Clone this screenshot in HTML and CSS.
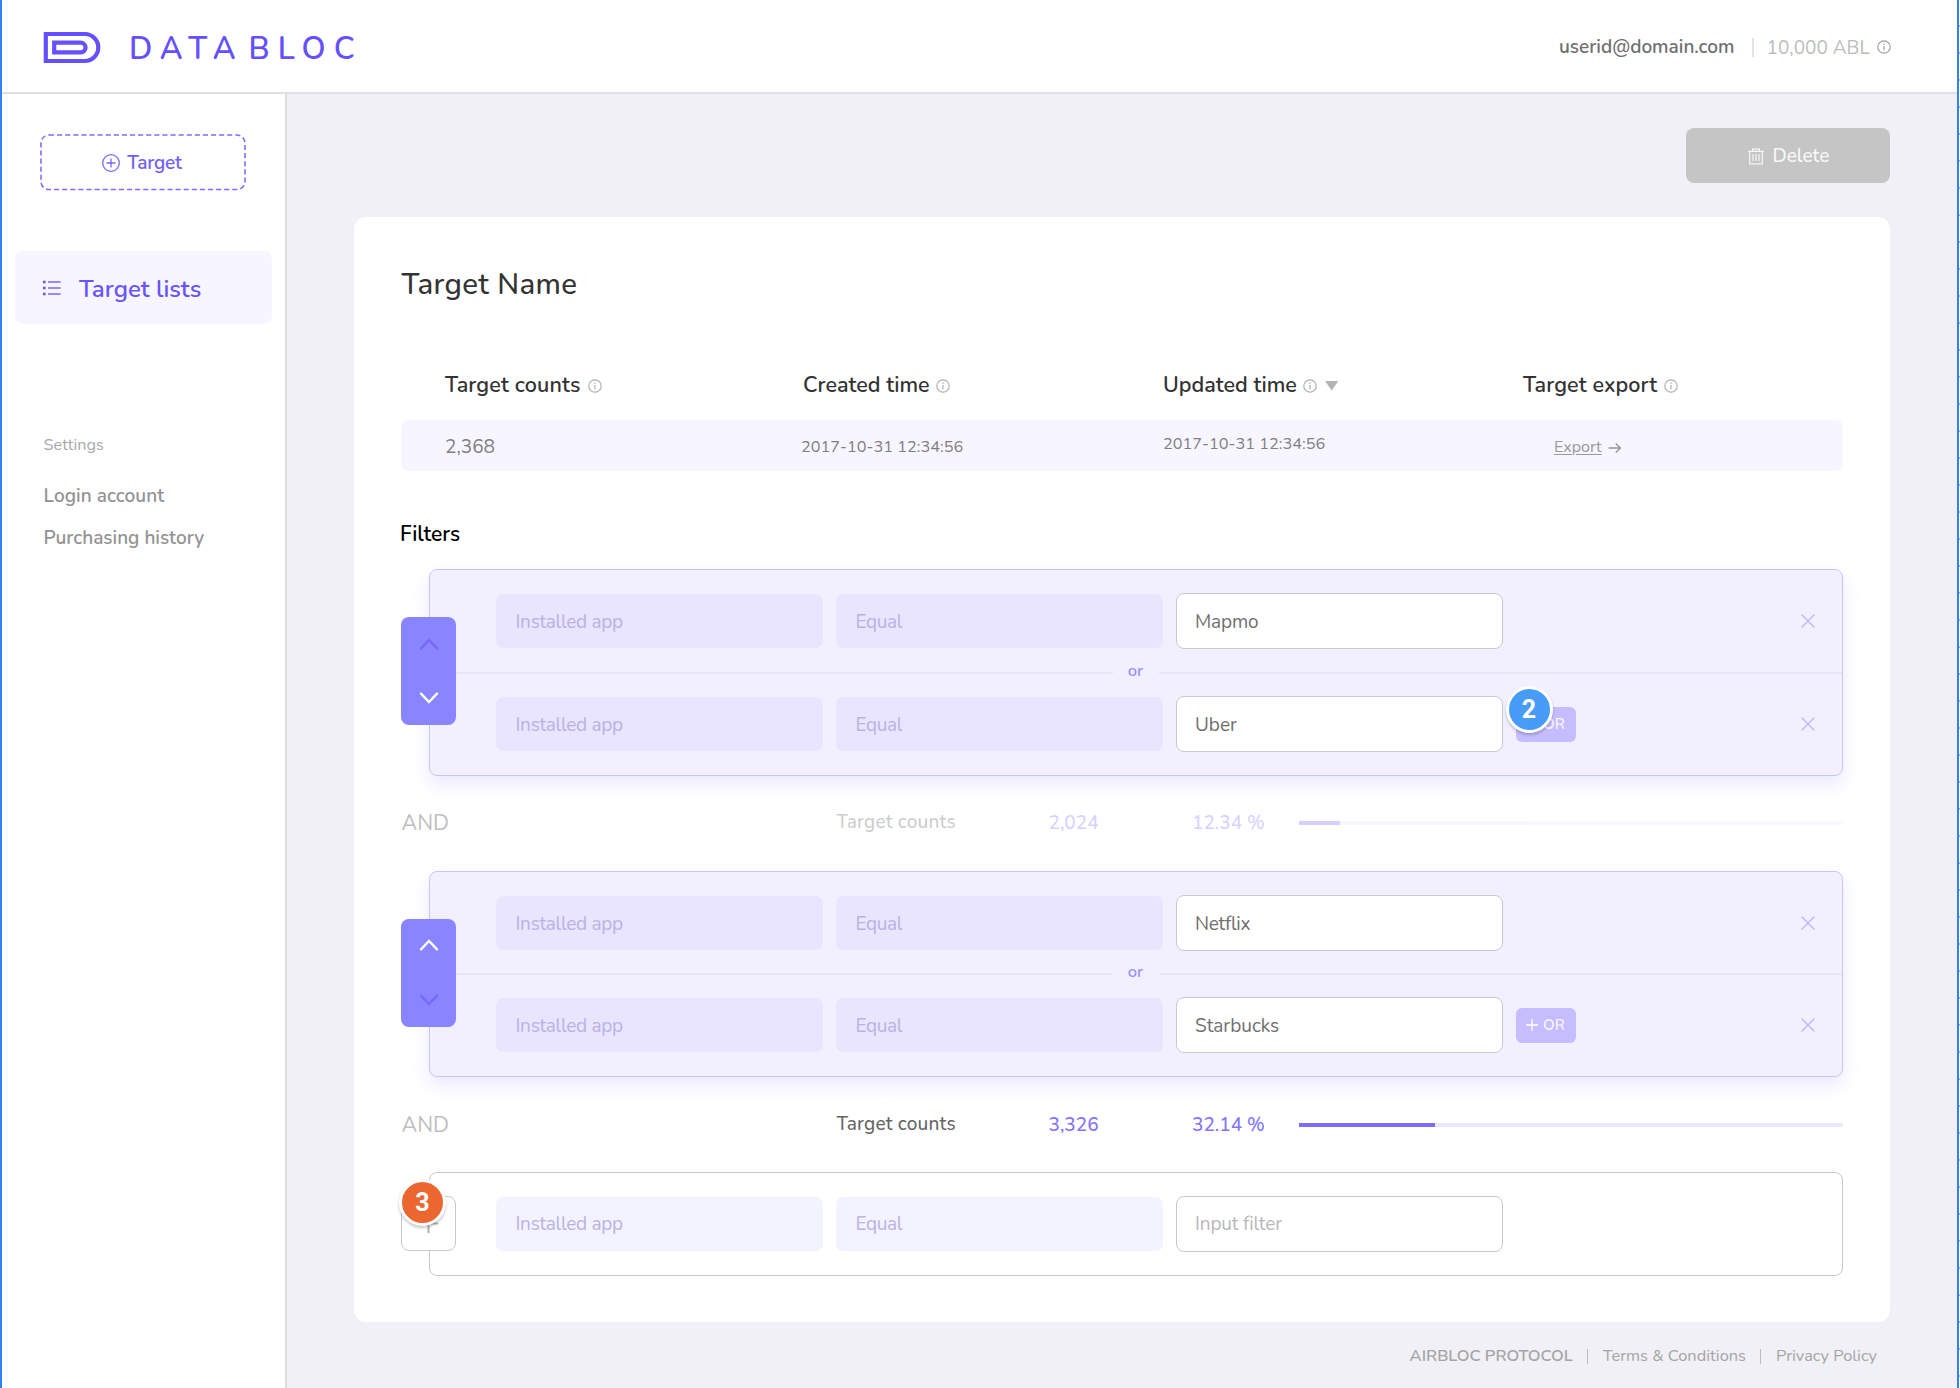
FILE: index.html
```html
<!DOCTYPE html>
<html lang="en">
<head>
<meta charset="utf-8">
<title>Databloc</title>
<link rel="stylesheet" href="styles.css">
</head>
<body>
<svg class="defs" width="0" height="0" aria-hidden="true">
  <symbol id="info" viewBox="0 0 14 14"><circle cx="7" cy="7" r="6.2" fill="none" stroke="currentColor" stroke-width="1.2"/><path d="M7 6v4.2M7 3.6v1.3" stroke="currentColor" stroke-width="1.2"/></symbol>
  <symbol id="close" viewBox="0 0 14 14"><path d="M1 1l12 12M13 1L1 13" stroke="currentColor" stroke-width="1.5" stroke-linecap="round"/></symbol>
  <symbol id="up" viewBox="0 0 20 12"><path d="M2 10.3l8-8.3 8 8.3" fill="none" stroke="currentColor" stroke-width="2.4" stroke-linecap="round"/></symbol>
  <symbol id="down" viewBox="0 0 20 12"><path d="M2 1.7l8 8.3 8-8.3" fill="none" stroke="currentColor" stroke-width="2.4" stroke-linecap="round"/></symbol>
</svg>
<div class="app">
  <header class="topbar">
    <div class="brand">
      <svg width="58" height="33" viewBox="0 0 58 33"><path d="M2.8 3h39a13.4 13.4 0 0 1 0 27h-39z M11.200 11.700h26.500a4.850 4.850 0 0 1 0 9.700h-26.500z" fill="none" stroke="#6450ff" stroke-width="4.200"/></svg>
      <span class="word data">DATA</span><span class="word bloc">BLOC</span>
    </div>
    <div class="account"><span class="email">userid@domain.com</span><i></i><span class="balance">10,000 ABL</span><svg class="info"><use href="#info"/></svg></div>
  </header>
  <div class="body">
    <nav class="sidebar">
      <a class="new-target">
        <svg class="dash" width="206" height="57"><rect x="1" y="1" width="204" height="54.500" rx="8" fill="none" stroke="#7d6cff" stroke-width="1.600" stroke-dasharray="5.100 3"/></svg>
        <svg width="18" height="18" viewBox="0 0 18 18"><circle cx="9" cy="9" r="8.300" fill="none" stroke="#7868fb" stroke-width="1.300"/><path d="M9 4.500v9M4.500 9h9" stroke="#7868fb" stroke-width="1.300"/></svg>
        <span>Target</span>
      </a>
      <a class="nav-item">
        <svg width="18" height="16" viewBox="0 0 18 16"><path d="M0 2h2.600M0 8h2.600M0 14h2.600" stroke="#6450ff" stroke-width="2.600"/><path d="M5 2h12.700M5 8h12.700M5 14h12.700" stroke="#7868fb" stroke-width="1.600"/></svg>
        <span>Target lists</span>
      </a>
      <h4>Settings</h4>
      <a class="sub login">Login account</a>
      <a class="sub history">Purchasing history</a>
    </nav>
    <main>
      <button class="delete">
        <svg width="16" height="17" viewBox="0 0 16 17"><path d="M.3 3.300h15.400M4.600 3V1.200h6.800V3M1.700 3.500v12.300h12.600V3.500M5 6v7M8 6v7M11 6v7" fill="none" stroke="#fff" stroke-opacity=".85" stroke-width="1.200"/></svg>
        <span>Delete</span>
      </button>
      <section class="card">
        <h1><span>Target Name</span></h1>
        <div class="thead">
          <div><span class="h-counts">Target counts</span><svg class="info"><use href="#info"/></svg></div>
          <div><span class="h-created">Created time</span><svg class="info"><use href="#info"/></svg></div>
          <div><span class="h-updated">Updated time</span><svg class="info"><use href="#info"/></svg><svg class="sort" width="14" height="10"><path d="M0 0h13.400L6.700 9.500z" fill="#b4b4b4"/></svg></div>
          <div><span class="h-export">Target export</span><svg class="info"><use href="#info"/></svg></div>
        </div>
        <div class="trow">
          <div class="num">2,368</div>
          <div class="date created">2017-10-31 12:34:56</div>
          <div class="date updated">2017-10-31 12:34:56</div>
          <div class="export"><a>Export</a><svg width="14" height="12" viewBox="0 0 14 12"><path d="M.5 6h11.800M7.800 1.500L12.300 6l-4.500 4.500" fill="none" stroke="#999" stroke-width="1.400"/></svg></div>
        </div>
        <h2><span>Filters</span></h2>

        <div class="group">
          <div class="mover"><svg class="dim"><use href="#up"/></svg><svg><use href="#down"/></svg></div>
          <div class="panel">
            <div class="frow"><div class="sel app-name"><span>Installed app</span></div><div class="sel equal"><span>Equal</span></div><div class="inp mapmo"><span>Mapmo</span></div><svg class="close"><use href="#close"/></svg></div>
            <div class="or"><hr><span>or</span><hr></div>
            <div class="frow"><div class="sel app-name"><span>Installed app</span></div><div class="sel equal"><span>Equal</span></div><div class="inp uber"><span>Uber</span></div><div class="add-or"><svg width="12" height="12"><path d="M6 0v12M0 6h12" stroke="#fff" stroke-width="1.300"/></svg><span>OR</span><b class="badge blue">2</b></div><svg class="close"><use href="#close"/></svg></div>
          </div>
        </div>
        <div class="stat"><span class="and">AND</span><div class="vals faded"><span class="lbl">Target counts</span><span class="n">2,024</span><span class="pct">12.34 %</span><div class="bar"><i style="width:7.600%"></i></div></div></div>

        <div class="group second">
          <div class="mover"><svg><use href="#up"/></svg><svg class="dim"><use href="#down"/></svg></div>
          <div class="panel">
            <div class="frow"><div class="sel app-name"><span>Installed app</span></div><div class="sel equal"><span>Equal</span></div><div class="inp netflix"><span>Netflix</span></div><svg class="close"><use href="#close"/></svg></div>
            <div class="or"><hr><span>or</span><hr></div>
            <div class="frow"><div class="sel app-name"><span>Installed app</span></div><div class="sel equal"><span>Equal</span></div><div class="inp starbucks"><span>Starbucks</span></div><div class="add-or"><svg width="12" height="12"><path d="M6 0v12M0 6h12" stroke="#fff" stroke-width="1.300"/></svg><span>OR</span></div><svg class="close"><use href="#close"/></svg></div>
          </div>
        </div>
        <div class="stat"><span class="and">AND</span><div class="vals"><span class="lbl">Target counts</span><span class="n">3,326</span><span class="pct">32.14 %</span><div class="bar"><i style="width:25.100%"></i></div></div></div>

        <div class="group empty">
          <div class="plus"><svg width="19" height="19"><path d="M9.500 0v19M0 9.500h19" stroke="#b0b0b0" stroke-width="2"/></svg><b class="badge orange">3</b></div>
          <div class="panel">
            <div class="frow"><div class="sel app-name"><span>Installed app</span></div><div class="sel equal"><span>Equal</span></div><div class="inp hint"><span>Input filter</span></div></div>
          </div>
        </div>
      </section>
      <footer><span class="f1">AIRBLOC PROTOCOL</span><i></i><span class="f2">Terms &amp; Conditions</span><i></i><span class="f3">Privacy Policy</span></footer>
    </main>
  </div>
</div>
<div class="ruler"></div>
</body>
</html>
```
FILE: styles.css
```css
* { box-sizing: border-box; }
body { margin: 0; height: 1388px; display: flex; overflow: hidden; background: #fff; font-family: Nunito, Lato, "Open Sans", sans-serif; font-size: 19px; line-height: 1.2; color: #6f6f6f; }
.defs { position: absolute; }
svg { display: block; flex: none; }
span, a, h1, h2, h4 { white-space: nowrap; }
.app { width: 1959px; display: flex; flex-direction: column; border: solid #2f82f0; border-width: 0 2px; flex: none; }
.ruler { width: 1px; background: repeating-linear-gradient(#fff 0 25px, #a9b4cc 25px 27px); }

.topbar { height: 94px; border-bottom: 2px solid #e0e0e0; display: flex; justify-content: space-between; padding: 0 66px 0 41px; flex: none; }
.brand { display: flex; align-items: center; padding-top: 2px; }
.word { margin-top: 3px; color: #6450ff; font-size: 31px; font-weight: 600; line-height: 36px; }
.data { margin-left: 28px; width: 119.500px; letter-spacing: 8px; }
.bloc { letter-spacing: 8px; }
.account { display: flex; align-items: center; padding-top: 1px; }
.account i { width: 2px; height: 19px; background: #e3e3e3; margin: 1px 12.500px 0 18px; }
.email { font-weight: 600; width: 175px; padding-top: 1px; }
.balance { color: #bcbcbc; width: 103.500px; padding-top: 3px; }
.info { width: 14px; height: 14px; color: #b0b0b0; }
.account .info { margin: 1px 0 0 7px; color: #a0a0a0; }

.body { flex: 1; display: flex; }
.sidebar { width: 285px; border-right: 2px solid #dedede; background: #fff; display: flex; flex-direction: column; align-items: flex-start; }
.new-target { position: relative; margin: 40px 0 0 38px; width: 206px; height: 57px; display: flex; align-items: center; justify-content: center; gap: 7px; padding-right: 2px; color: #7060fb; font-weight: 600; }
.new-target span { letter-spacing: -.2px; padding-top: 2px; }
.dash { position: absolute; left: 0; top: 0; }
.nav-item { margin: 60px 0 0 13px; width: 257px; height: 73px; border-radius: 8px; background: #f7f5ff; display: flex; align-items: center; padding: 1px 0 0 28px; gap: 18px; color: #6854fb; font-size: 24px; font-weight: 600; }
.nav-item span { padding-top: 2px; letter-spacing: .05px; }
.sidebar h4 { margin: 110px 0 0 41.500px; font-size: 16.300px; line-height: 22px; font-weight: 400; color: #a8a8a8; }
.sub { margin-left: 41.500px; line-height: 24px; font-weight: 600; color: #939393; }
.login { margin-top: 28px; letter-spacing: .05px; }
.history { margin-top: 18px; }

main { flex: 1; background: #f0f0f6; padding: 34px 67px 0; display: flex; flex-direction: column; align-items: stretch; }
.delete { align-self: flex-end; width: 204px; height: 55px; border: 0; border-radius: 8px; background: #c5c5c5; color: #f8f8f8; font: 500 19px/1.2 Nunito, Lato, sans-serif; display: flex; align-items: center; justify-content: center; gap: 9px; padding: 1px 5px 0 6px; }
.delete span { padding-top: 1px; }
.card { width: 1536px; height: 1105px; margin-top: 34px; background: #fff; border-radius: 12px; padding: 49px 47px 0; }
h1 { margin: 0 0 0 .5px; font-size: 29.500px; line-height: 36px; font-weight: 500; letter-spacing: .35px; color: #333; }
.thead, .trow { display: grid; grid-template-columns: 358px 360px 360px 1fr; padding-left: 44px; }
.thead { margin-top: 69px; height: 30px; font-size: 21.500px; font-weight: 600; color: #333; }
.thead div { display: flex; align-items: center; gap: 7px; }
.h-counts { letter-spacing: .15px; }
.h-export { letter-spacing: .1px; }
.h-created, .h-updated { margin-right: -1px; }
.sort { margin-left: 1px; }
.trow { margin-top: 19px; width: 1442px; height: 51px; border-radius: 7px; background: #f7f5ff; align-items: center; color: #7f7f7f; }
.num { font-size: 19px; padding-top: 3px; }
.date { font-size: 16.300px; padding-top: 4px; }
.created { margin-left: -2px; }
.updated { padding: 0 0 2px; }
.export { margin-left: 31px; padding-top: 5px; display: flex; align-items: center; gap: 6px; font-size: 16px; color: #999; }
.export a { text-decoration: underline; text-underline-offset: 2px; }
h2 { margin: 50px 0 0 -1px; font-size: 21px; line-height: 26px; font-weight: 600; color: #000; }

.group { display: flex; align-items: center; width: 1442px; margin-top: 22px; }
.stat + .group { margin-top: 22.500px; }
.mover { width: 55px; height: 108px; margin: 0 -27px 3px 0; border-radius: 8px; background: #8984ff; color: #fff; z-index: 1; display: flex; flex-direction: column; align-items: center; justify-content: space-between; padding: 20.500px 0 21px; }
.mover svg { width: 20px; height: 12px; }
.mover .dim { color: #7a68fb; }
.panel { flex: 1; height: 207px; border: 1.500px solid #c5c6fc; border-radius: 8px; background: #f2f0ff; box-shadow: 0 8px 18px rgba(110, 95, 255, .14); padding: 23px 0; display: flex; flex-direction: column; justify-content: space-between; position: relative; }
.second .panel { height: 206px; }
.frow { height: 56px; display: flex; align-items: center; padding: 0 27px 0 66px; }
.sel span, .inp span { padding-top: 2px; }
.sel { width: 326.500px; height: 54px; margin-right: 13.500px; border-radius: 7px; background: #e9e5fe; color: #bab2e4; display: flex; align-items: center; padding-left: 19.500px; }
.app-name { letter-spacing: -.27px; }
.equal { letter-spacing: -.4px; }
.inp { width: 327.500px; height: 56px; margin-left: -.5px; border: 1.500px solid #c9c9c9; border-radius: 8px; background: #fff; display: flex; align-items: center; padding-left: 18.500px; }
.mapmo, .hint { letter-spacing: -.15px; }
.netflix { letter-spacing: -.3px; }
.close { width: 14px; height: 14px; margin-left: auto; color: #c3b9ff; }
.or { height: 16px; margin: -1px 0; display: flex; align-items: center; color: #9b90ff; font-size: 16.500px; font-weight: 600; }
.or hr { height: 2px; border: 0; margin: 0; background: #e8e5f8; flex: 1; }
.or span { width: 46px; text-align: center; line-height: 16px; margin-top: -4px; padding-right: 1px; }
.or hr:first-child { flex: none; width: 683px; }
.add-or { position: relative; margin-left: 12.500px; width: 60px; height: 35px; border-radius: 6px; background: #c5bdff; color: #f5f3ff; display: flex; align-items: center; justify-content: center; gap: 5px; font-size: 15px; font-weight: 600; }
.badge { position: absolute; width: 47px; height: 47px; border-radius: 50%; border: 3.500px solid #fff; color: #fff; font: 700 25px/42px Roboto, sans-serif; text-align: center; box-shadow: 0 2px 3px rgba(0, 0, 0, .22); }
.blue { left: -10px; top: -20.500px; background: #469cf7; }
.orange { left: -3px; top: -18px; background: #ec672f; }

.stat { width: 1442px; height: 50px; margin-top: 22.500px; display: flex; align-items: center; }
.second + .stat { margin-top: 23px; }
.second + .stat + .group { margin-top: 22px; }
.and { width: 435.500px; padding-left: .5px; font-size: 21.500px; color: #bfbfbf; padding-top: 1px; }
.vals { flex: 1; display: flex; align-items: center; color: #8073ff; font-size: 19px; font-weight: 500; }
.lbl { width: 212px; color: #666; padding-bottom: 2px; letter-spacing: .18px; }
.n { width: 143.500px; }
.pct { width: 106.500px; }
.bar { flex: 1; height: 4px; background: #ebe7fe; }
.bar i { display: block; height: 4px; background: #7c6cff; }
.faded { opacity: .32; }

.empty .panel { height: 103.500px; background: #fff; border-color: #c9c9c9; box-shadow: none; justify-content: center; }
.empty .sel { background: #f3f2ff; }
.plus { position: relative; width: 55px; height: 55px; margin-right: -27px; border: 1.500px solid #c9c9c9; border-radius: 8px; background: #fff; z-index: 1; display: flex; align-items: center; justify-content: center; }
.hint { color: #b8b8b8; }

footer { margin-top: 22px; display: flex; align-items: center; justify-content: flex-end; padding-right: 13px; font-size: 16.400px; line-height: 24px; color: #a5a5a5; }
footer i { width: 1px; height: 15px; background: #bdbdbd; margin: 0 14.500px; }
.f1 { font-weight: 600; }
```
